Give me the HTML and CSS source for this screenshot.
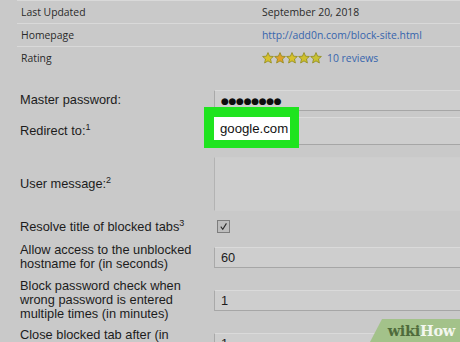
FILE: index.html
```html
<!DOCTYPE html>
<html lang="en">
<head>
  <meta charset="UTF-8" />
  <title>Block Site options</title>
  <link rel="stylesheet" href="styles.css">
</head>
<body>
  <div class="info">
    <div class="info-row">
      <span class="cell">Last Updated</span>
      <span class="cell">September 20, 2018</span>
    </div>
    <div class="info-row">
      <span class="cell">Homepage</span>
      <span class="cell"><a href="#">http://add0n.com/block-site.html</a></span>
    </div>
    <div class="info-row">
      <span class="cell">Rating</span>
      <span class="cell rating">
        <svg class="stars" width="60" height="12" viewBox="0 0 60 12">
          <defs>
            <polygon id="star" points="6,0.6 7.6,4.2 11.4,4.5 8.5,7 9.4,11 6,8.9 2.6,11 3.5,7 0.6,4.5 4.4,4.2" />
          </defs>
          <use href="#star" x="0" fill="#d8c22c" stroke="#8f8a1c" stroke-width="0.8" />
          <use href="#star" x="12" fill="#e0a12a" stroke="#8f8a1c" stroke-width="0.8" />
          <use href="#star" x="24" fill="#d8c22c" stroke="#8f8a1c" stroke-width="0.8" />
          <use href="#star" x="36" fill="#cfc02c" stroke="#8f8a1c" stroke-width="0.8" />
          <use href="#star" x="48" fill="#c9c232" stroke="#8f8a1c" stroke-width="0.8" />
        </svg>
        <a href="#">10 reviews</a>
      </span>
    </div>
  </div>

  <form class="options">
    <div class="row r-master">
      <label>Master password:</label>
      <div class="field"><span class="dots">&#9679;&#9679;&#9679;&#9679;&#9679;&#9679;&#9679;&#9679;</span></div>
    </div>

    <div class="row r-redirect">
      <label>Redirect to:<sup>1</sup></label>
      <div class="field tall">
        <div class="highlight"><span class="highlight-value">google.com</span></div>
      </div>
    </div>

    <div class="row r-message">
      <label>User message:<sup>2</sup></label>
      <div class="field area"></div>
    </div>

    <div class="row r-check">
      <label>Resolve title of blocked tabs<sup>3</sup></label>
      <span class="check">
        <svg width="12" height="12" viewBox="0 0 12 12">
          <path d="M3 6.2 L5.2 9 L9.2 2.6" fill="none" stroke="#2a2a2a" stroke-width="1.2" />
        </svg>
      </span>
    </div>

    <div class="row r-seconds">
      <label>Allow access to the unblocked<br>hostname for (in seconds)</label>
      <div class="field">60</div>
    </div>

    <div class="row r-minutes">
      <label>Block password check when<br>wrong password is entered<br>multiple times (in minutes)</label>
      <div class="field">1</div>
    </div>

    <div class="row r-close">
      <label>Close blocked tab after (in</label>
      <div class="field">1</div>
    </div>
  </form>

  <div class="watermark"><span class="wiki">wiki</span><span class="how">How</span></div>
</body>
</html>
```

FILE: styles.css
```css
body {
  margin: 0;
  width: 460px;
  height: 342px;
  overflow: hidden;
  position: relative;
  background: #c9c9c9;
  font-family: "Liberation Sans", Arial, sans-serif;
  color: #1c1c1c;
}

.info {
  margin-left: 17px;
  font-family: "Open Sans", "Noto Sans", sans-serif;
  font-size: 10.4px;
  color: #2a2a2a;
}

.info-row {
  display: grid;
  grid-template-columns: 241px 1fr;
  align-items: center;
  height: 22px;
  border-top: 1px solid #d9d9d9;
}

.cell {
  padding-left: 4px;
}

.info a {
  color: #3765ad;
  text-decoration: none;
}

.rating {
  display: flex;
  align-items: center;
  gap: 5px;
}

.stars {
  display: block;
}

.options {
  margin-top: 21px;
  width: 480px;
  font-size: 12.8px;
}

.row {
  display: flex;
  align-items: center;
}

.row label {
  width: 194px;
  padding-left: 20px;
  line-height: 14.3px;
  flex-shrink: 0;
}

sup {
  font-size: 9px;
  line-height: 0;
  vertical-align: 5px;
}

.field {
  flex: 1;
  height: 19px;
  line-height: 19px;
  padding-left: 6px;
  background: #cecece;
  border: 1px solid #dadada;
  border-left-color: #a9a9a9;
  border-bottom-color: #a6a6a6;
  position: relative;
}

.dots {
  font-family: "DejaVu Sans", sans-serif;
  font-size: 9px;
  letter-spacing: -0.3px;
  color: #0d0d0d;
  vertical-align: 1px;
}

.r-redirect {
  margin-top: 6px;
}

.field.tall {
  height: 26px;
}

.highlight {
  position: absolute;
  left: -11px;
  top: -11px;
  width: 76px;
  height: 23px;
  padding: 10px 9px 8px 10px;
  background: #1fe41f;
}

.highlight-value {
  display: block;
  height: 23px;
  line-height: 23px;
  padding-left: 6px;
  background: #fff;
  color: #111;
  font-size: 13.2px;
}

.r-message {
  margin-top: 12px;
}

.field.area {
  height: 52px;
  border-color: #cdcdcd;
  border-left-color: #b3b3b3;
}

.r-check {
  margin-top: 8px;
  height: 16px;
}

.check {
  width: 11px;
  height: 11px;
  margin-left: 3px;
  margin-top: -1px;
  border: 1px solid #7d7d7d;
  background: #bdbdbd;
}

.check svg {
  display: block;
  width: 11px;
  height: 11px;
}

.r-seconds {
  margin-top: 8px;
}

.r-minutes {
  margin-top: 7px;
}

.r-close {
  margin-top: 7px;
  align-items: flex-start;
}

.r-close .field {
  margin-top: 5px;
}

.watermark {
  position: absolute;
  right: 0;
  bottom: 0;
  width: 90px;
  height: 23px;
  background: #a3c28a;
  clip-path: polygon(12px 0, 100% 0, 100% 100%, 0 100%);
  font-family: "DejaVu Serif", "Liberation Serif", serif;
  font-weight: bold;
  font-size: 14.5px;
  line-height: 23px;
  text-align: right;
  letter-spacing: -0.3px;
}

.wiki {
  color: #4f6b3b;
}

.how {
  color: #f3f7ef;
  padding-right: 5px;
}
```
